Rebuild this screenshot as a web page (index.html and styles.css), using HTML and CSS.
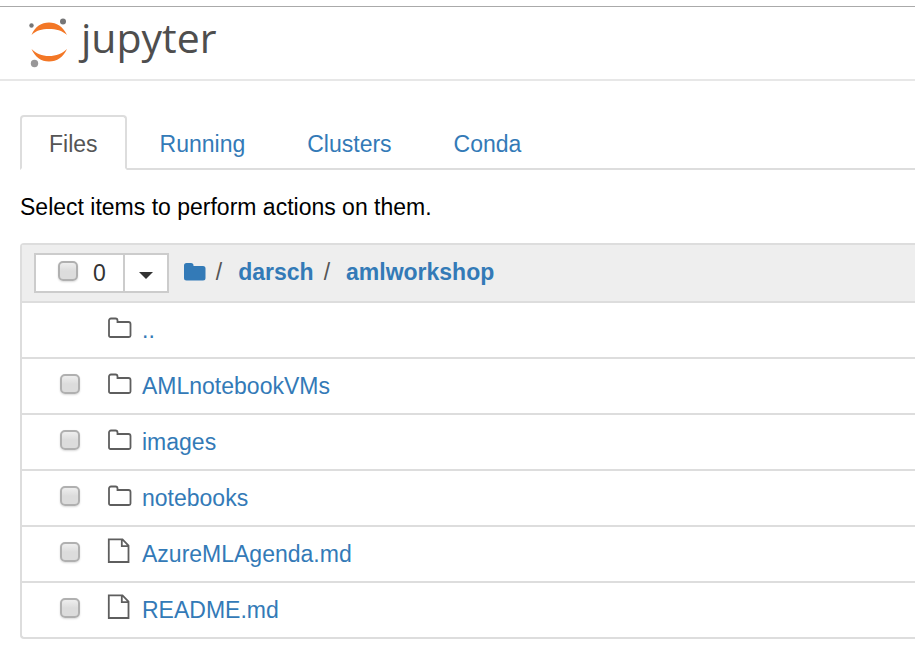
FILE: index.html
```html
<!DOCTYPE html>
<html lang="en">
<head>
<meta charset="utf-8">
<title>Jupyter</title>
<link rel="stylesheet" href="styles.css">
</head>
<body>
<svg class="sprite" aria-hidden="true">
  <symbol id="folder" viewBox="0 0 28 28">
    <path d="M2 21.500V6.500a2 2 0 0 1 2-2h4.500a2 2 0 0 1 2 2v1.500h11a2 2 0 0 1 2 2v11.500a1.500 1.500 0 0 1-1.500 1.500H3.500a1.500 1.500 0 0 1-1.500-1.500z" fill="none" stroke="#5e5e5e" stroke-width="1.800"/>
  </symbol>
  <symbol id="file" viewBox="0 0 28 28">
    <path d="M1.800 1.300h13.700l6 6.200v16.500H1.800z M14.800 1.300v6.900h6.700" fill="none" stroke="#5e5e5e" stroke-width="1.800"/>
  </symbol>
</svg>
<header class="header">
  <a class="logo" href="#">
    <svg class="logo-mark" viewBox="0 0 40 50" aria-hidden="true">
      <path d="M2.500 17C6 8.500 12.500 4.500 20 4.500S34 8.500 38 17C33 12.500 27 11 20 11S7 12.500 2.500 17z" fill="#f37726"/>
      <path d="M2.500 31C7 35.500 13 38 20 38s13.500-2.500 18-7C34.500 39 28 43.500 20 43.500S6 39 2.500 31z" fill="#f37726"/>
      <circle cx="2.500" cy="7.500" r="2.200" fill="#767677"/>
      <circle cx="34" cy="3.500" r="3" fill="#767677"/>
      <circle cx="5.500" cy="45.500" r="3.700" fill="#989798"/>
    </svg>
    <span class="logo-text">jupyter</span>
  </a>
</header>
<main class="main">
  <nav class="tabs">
    <a class="tab active" href="#files">Files</a>
    <a class="tab" href="#running">Running</a>
    <a class="tab" href="#clusters">Clusters</a>
    <a class="tab" href="#conda">Conda</a>
  </nav>
  <p class="hint">Select items to perform actions on them.</p>
  <section class="list" id="files">
    <div class="toolbar">
      <div class="select-group">
        <label class="select-all"><input class="check" type="checkbox" aria-label="Select all"><span>0</span></label>
        <button class="menu" type="button" aria-label="Select by type"><span class="caret"></span></button>
      </div>
      <nav class="crumbs">
        <a class="home" href="#" aria-label="Home"><svg class="home-icon" viewBox="0 0 22 20" aria-hidden="true"><path d="M0 3.500A2.500 2.500 0 0 1 2.500 1H7a2.500 2.500 0 0 1 2.500 2.500V4h9.500a2.500 2.500 0 0 1 2.500 2.500V16a2.500 2.500 0 0 1-2.500 2.500H2.500A2.500 2.500 0 0 1 0 16z" fill="#337ab7"/></svg></a>
        <span class="slash">/</span>
        <a class="crumb" href="#darsch">darsch</a>
        <span class="slash">/</span>
        <a class="crumb" href="#amlworkshop">amlworkshop</a>
      </nav>
    </div>
    <ul class="rows">
      <li class="row"><span class="check-space"></span><svg class="icon" aria-hidden="true"><use href="#folder"/></svg><a href="#up">..</a></li>
      <li class="row"><input class="check" type="checkbox" aria-labelledby="f1"><svg class="icon" aria-hidden="true"><use href="#folder"/></svg><a id="f1" href="#f1">AMLnotebookVMs</a></li>
      <li class="row"><input class="check" type="checkbox" aria-labelledby="f2"><svg class="icon" aria-hidden="true"><use href="#folder"/></svg><a id="f2" href="#f2">images</a></li>
      <li class="row"><input class="check" type="checkbox" aria-labelledby="f3"><svg class="icon" aria-hidden="true"><use href="#folder"/></svg><a id="f3" href="#f3">notebooks</a></li>
      <li class="row"><input class="check" type="checkbox" aria-labelledby="f4"><svg class="icon" aria-hidden="true"><use href="#file"/></svg><a id="f4" href="#f4">AzureMLAgenda.md</a></li>
      <li class="row"><input class="check" type="checkbox" aria-labelledby="f5"><svg class="icon" aria-hidden="true"><use href="#file"/></svg><a id="f5" href="#f5">README.md</a></li>
    </ul>
  </section>
</main>
</body>
</html>
```
FILE: styles.css
```css
* { box-sizing: border-box; }

body {
  margin: 0;
  padding-top: 6px;
  background: #fff;
  color: #000;
  font: 23px/32px "Liberation Sans", Arial, sans-serif;
}

a { color: #337ab7; text-decoration: none; }

.sprite { display: none; }

.header {
  border-top: 1px solid #aaa;
  border-bottom: 2px solid #e7e7e7;
  padding: 11px 29px;
}

.logo { display: flex; gap: 12px; }
.logo-mark { width: 40px; height: 50px; }
.logo-text {
  color: #4e4e4e;
  font: 500 41px/38px "Open Sans", sans-serif;
}

.main { padding: 34px 0 24px 20px; }

.tabs {
  display: flex;
  gap: 4px;
  border-bottom: 2px solid #ddd;
}
.tab {
  padding: 11px 27px 6px;
  border: 2px solid transparent;
  border-radius: 4px 4px 0 0;
}
.tab.active {
  margin-bottom: -2px;
  border-color: #ddd #ddd #fff;
  background: #fff;
  color: #555;
}

.hint { margin: 21px 0 20px; }

.list {
  border: 2px solid #ddd;
  border-right: 0;
  border-radius: 4px 0 0 4px;
}

.toolbar {
  display: flex;
  align-items: center;
  gap: 15px;
  padding: 8px 12px;
  border-bottom: 2px solid #ddd;
  background: #eee;
}

.select-group {
  display: flex;
  height: 40px;
  border: 2px solid #ccc;
  background: #fff;
}
.select-all {
  display: flex;
  align-items: center;
  gap: 15px;
  padding: 0 17px 0 22px;
  color: #333;
}
.menu {
  width: 44px;
  padding: 4px 0 0;
  border: 0;
  border-left: 2px solid #ccc;
  background: #fff;
}
.caret {
  display: inline-block;
  border: 7px solid transparent;
  border-top-color: #333;
  border-bottom: 0;
  vertical-align: middle;
}

.check {
  appearance: none;
  flex: none;
  width: 20px;
  height: 20px;
  margin: 0 0 4px;
  border: 2px solid #b0b0b0;
  border-radius: 5px;
  background: linear-gradient(#eee, #dcdcdc 50%);
  box-shadow: 0 1px 2px rgba(0, 0, 0, .15);
}

.crumbs {
  display: flex;
  align-items: center;
  padding-bottom: 2px;
  font-weight: bold;
}
.home { display: flex; }
.home-icon { width: 22px; height: 20px; }
.slash { padding: 0 16px 0 10px; color: #555; font-weight: normal; }

.rows { margin: 0; padding: 0; list-style: none; }
.row {
  display: flex;
  align-items: center;
  height: 56px;
  padding-left: 38px;
  border-bottom: 2px solid #ddd;
}
.row:last-child { height: 54px; border-bottom: 0; }
.check-space { width: 20px; }
.icon { width: 28px; height: 28px; margin: 0 7px 4px 27px; }
```
